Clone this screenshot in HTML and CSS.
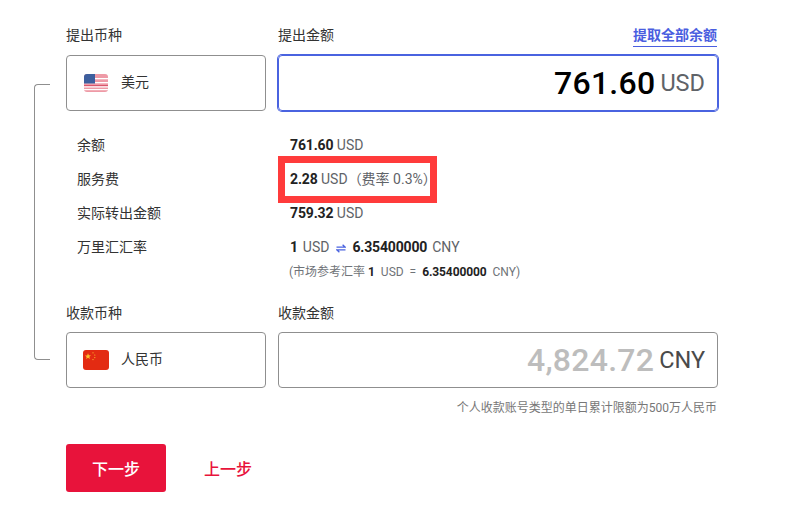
FILE: index.html
```html
<!DOCTYPE html>
<html lang="zh-CN">
<head>
<meta charset="utf-8">
<title>提出金额</title>
<link rel="stylesheet" href="styles.css">
</head>
<body>
<main class="form">
  <div class="bracket"></div>
  <section class="pair">
    <div class="col-left">
      <div class="label-row"><span>提出币种</span></div>
      <div class="box currency">
        <svg class="flag" viewBox="0 0 24 18" width="24" height="18">
          <defs><clipPath id="r1"><rect width="24" height="18" rx="3"/></clipPath></defs>
          <g clip-path="url(#r1)">
            <rect width="24" height="18" fill="#ee9aa6"/>
            <rect y="4" width="24" height="1.3" fill="#fff"/>
            <rect y="8" width="24" height="1.3" fill="#fff"/>
            <rect y="11" width="24" height="1.3" fill="#d9566c"/>
            <rect y="12.3" width="24" height="1.2" fill="#fff"/>
            <rect y="15" width="24" height="1.2" fill="#fff"/>
            <rect width="11" height="9.5" fill="#3d5f9e"/>
          </g>
        </svg>
        <span>美元</span>
      </div>
    </div>
    <div class="col-right">
      <div class="label-row"><span>提出金额</span><a class="all">提取全部余额</a></div>
      <div class="box amount active"><span class="num">761.60</span><span class="unit">USD</span></div>
    </div>
  </section>

  <section class="details">
    <div class="row"><span class="key">余额</span><span class="val"><b>761.60</b> USD</span></div>
    <div class="row"><span class="key">服务费</span><span class="val"><b>2.28</b> USD<span class="rate">（费率 0.3%）</span><i class="mark"></i></span></div>
    <div class="row"><span class="key">实际转出金额</span><span class="val"><b>759.32</b> USD</span></div>
    <div class="row"><span class="key">万里汇汇率</span><span class="val fx"><b>1</b> USD
      <svg class="swap" viewBox="0 0 10 9" width="10" height="9"><path d="M.5 3.2H9.2L6.6 .8M9.5 5.8H.8L3.4 8.2" fill="none" stroke="#4a63e0" stroke-width="1.3"/></svg>
      <b>6.35400000</b> CNY</span></div>
    <div class="ref">(市场参考汇率 <b>1</b> &nbsp;USD &nbsp;= &nbsp;<b>6.35400000</b> &nbsp;CNY)</div>
  </section>

  <section class="pair">
    <div class="col-left">
      <div class="label-row low"><span>收款币种</span></div>
      <div class="box currency">
        <svg class="flag cn" viewBox="0 0 26 20" width="26" height="20">
          <rect width="26" height="20" rx="3" fill="#e32b12"/>
          <path d="M5 3.2l.8 2.1 2.2.1-1.7 1.4.6 2.1L5 7.8 3.1 9l.6-2.1L2 5.5l2.2-.1z" fill="#fbc02d"/>
          <circle cx="10" cy="2.8" r=".6" fill="#fbc02d"/><circle cx="11.8" cy="5" r=".6" fill="#fbc02d"/>
          <circle cx="11.8" cy="7.6" r=".6" fill="#fbc02d"/><circle cx="10" cy="9.6" r=".6" fill="#fbc02d"/>
        </svg>
        <span>人民币</span>
      </div>
    </div>
    <div class="col-right">
      <div class="label-row low"><span>收款金额</span></div>
      <div class="box amount"><span class="num muted">4,824.72</span><span class="unit dark">CNY</span></div>
    </div>
  </section>

  <p class="note">个人收款账号类型的单日累计限额为500万人民币</p>

  <div class="actions">
    <button class="next">下一步</button>
    <button class="prev">上一步</button>
  </div>
</main>
</body>
</html>
```
FILE: styles.css
```css
* { box-sizing: border-box; }
html, body { margin: 0; background: #fff; }
body {
  width: 792px;
  height: 522px;
  overflow: hidden;
  font-family: Roboto, "Noto Sans CJK SC", sans-serif;
  color: #1f1f1f;
}
.form {
  position: relative;
  width: 652px;
  margin-left: 66px;
  padding-top: 25px;
}
.bracket {
  position: absolute;
  left: -32px;
  top: 84px;
  width: 16px;
  height: 276px;
  border: 1px solid #8f8f8f;
  border-right: 0;
  border-radius: 4px 0 0 4px;
}
.pair {
  display: grid;
  grid-template-columns: 200px 440px;
  column-gap: 12px;
}
.label-row {
  display: flex;
  justify-content: space-between;
  align-items: flex-start;
  height: 30px;
  font-size: 14px;
  line-height: 20px;
  color: #333;
}
.label-row.low { height: 29px; }
.all {
  font-size: 14px;
  font-weight: 700;
  color: #4a5ee0;
  border-bottom: 1px solid #4a5ee0;
  line-height: 21px;
  height: 22px;
  margin-right: 1px;
}
.box {
  height: 56px;
  border: 1px solid #8f8f8f;
  border-radius: 4px;
  display: flex;
  align-items: center;
}
.currency { padding-left: 17px; font-size: 14px; line-height: 20px; color: #333; }
.currency span { margin-top: -2px; }
.flag { margin-right: 13px; flex: none; }
.flag.cn { margin-left: -1px; margin-right: 12px; }
.amount { justify-content: flex-end; padding-right: 12px; }
.amount.active { border-color: #4a63e0; box-shadow: 0 0 0 1px #4a63e0; }
.num { font-size: 32px; font-weight: 500; color: #000; line-height: 40px; margin-right: 5px; letter-spacing: .25px; }
.num.muted { color: #bdbdbd; margin-right: 5px; }
.unit { font-size: 23.5px; color: #5f6368; line-height: 40px; }
.unit.dark { color: #4a4a4a; }
.details { padding-top: 17px; height: 192px; }
.row {
  display: flex;
  height: 34px;
  align-items: center;
  font-size: 14px;
  line-height: 20px;
  color: #333;
}
.key { width: 224px; padding-left: 11px; flex: none; }
.val { position: relative; color: #5f6368; font-size: 14px; }
.val b { color: #222; font-weight: 700; letter-spacing: -.15px; }
.fx { word-spacing: 1.5px; }
.swap { margin: 0 1.5px; vertical-align: -1px; }
.rate { color: #5f6368; }
.mark {
  position: absolute;
  left: -12px;
  top: -13px;
  width: 159px;
  height: 47px;
  border: 7px solid #ff3b3b;
}
.ref {
  margin-left: 223px;
  margin-top: 0;
  font-size: 12px;
  line-height: 16px;
  color: #6f7378;
}
.ref b { color: #222; font-weight: 700; letter-spacing: -.1px; }
.note {
  margin: 12px 1px 0 0;
  text-align: right;
  font-size: 12px;
  line-height: 16px;
  color: #777;
}
.actions {
  display: flex;
  align-items: center;
  margin-top: 28px;
  gap: 38px;
}
.actions button {
  font-family: "Noto Sans CJK SC", sans-serif;
  font-size: 16px;
  font-weight: 500;
  border: 0;
  background: none;
  padding: 0;
  cursor: pointer;
}
.actions .next {
  width: 100px;
  height: 48px;
  background: #e8133b;
  color: #fff;
  border-radius: 3px;
}
.prev { color: #e8133b; }
```
